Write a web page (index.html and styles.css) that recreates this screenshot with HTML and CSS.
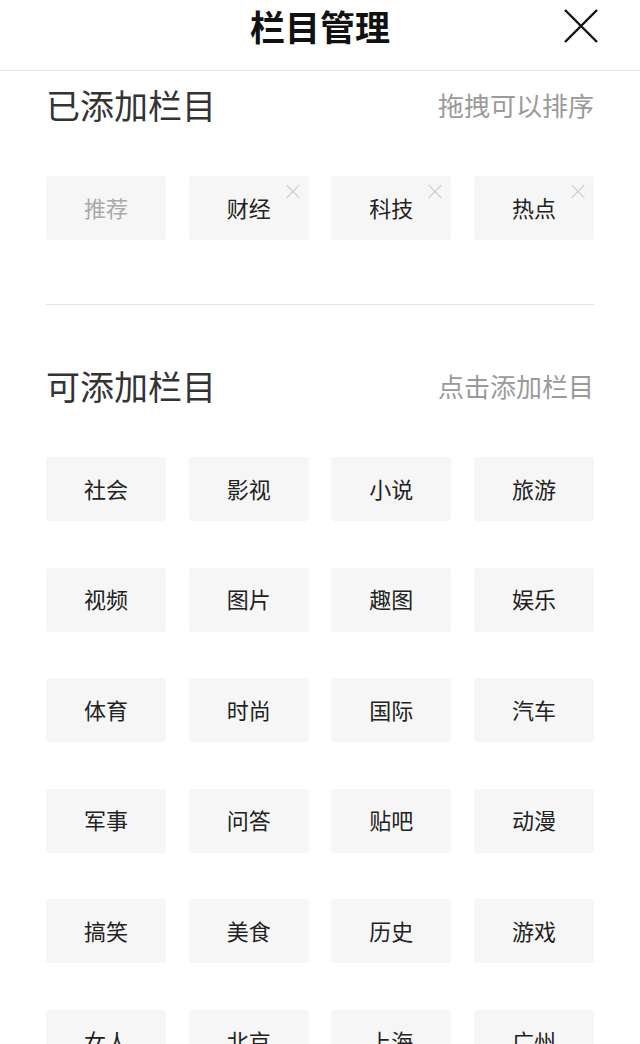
FILE: index.html
```html
<!DOCTYPE html>
<html lang="zh-CN">
<head>
  <meta charset="UTF-8">
  <title>栏目管理</title>
  <link rel="stylesheet" href="styles.css">
</head>
<body>
  <header class="topbar">
    <h1 class="topbar-title">栏目管理</h1>
    <button class="close-btn" aria-label="关闭">
      <svg width="34" height="34" viewBox="0 0 34 34">
        <path d="M1 1 L33 33 M33 1 L1 33" stroke="#111" stroke-width="2.4" fill="none"/>
      </svg>
    </button>
  </header>

  <section class="panel">
    <div class="panel-head">
      <h2 class="panel-title">已添加栏目</h2>
      <span class="panel-hint">拖拽可以排序</span>
    </div>
    <div class="tiles">
      <div class="tile tile-fixed">推荐</div>
      <div class="tile">财经<span class="tile-remove"></span></div>
      <div class="tile">科技<span class="tile-remove"></span></div>
      <div class="tile">热点<span class="tile-remove"></span></div>
    </div>
  </section>

  <hr class="divider">

  <section class="panel panel-more">
    <div class="panel-head">
      <h2 class="panel-title">可添加栏目</h2>
      <span class="panel-hint">点击添加栏目</span>
    </div>
    <div class="tiles">
      <div class="tile">社会</div>
      <div class="tile">影视</div>
      <div class="tile">小说</div>
      <div class="tile">旅游</div>
      <div class="tile">视频</div>
      <div class="tile">图片</div>
      <div class="tile">趣图</div>
      <div class="tile">娱乐</div>
      <div class="tile">体育</div>
      <div class="tile">时尚</div>
      <div class="tile">国际</div>
      <div class="tile">汽车</div>
      <div class="tile">军事</div>
      <div class="tile">问答</div>
      <div class="tile">贴吧</div>
      <div class="tile">动漫</div>
      <div class="tile">搞笑</div>
      <div class="tile">美食</div>
      <div class="tile">历史</div>
      <div class="tile">游戏</div>
      <div class="tile">女人</div>
      <div class="tile">北京</div>
      <div class="tile">上海</div>
      <div class="tile">广州</div>
    </div>
  </section>
</body>
</html>
```

FILE: styles.css
```css
body {
  margin: 0;
  background: #fff;
  color: #222;
  font-family: "Noto Sans CJK SC", "Noto Sans", sans-serif;
  height: 1044px;
  overflow: hidden;
}

.topbar {
  height: 70px;
  border-bottom: 1px solid #e3e3e3;
  display: flex;
  align-items: flex-start;
  justify-content: center;
  position: relative;
}

.topbar-title {
  margin: 0;
  font-size: 35px;
  font-weight: 700;
  color: #111;
  line-height: 52px;
}

.close-btn {
  position: absolute;
  top: 9px;
  right: 42px;
  padding: 0;
  border: 0;
  background: none;
  display: flex;
}

.panel {
  padding: 9px 46px 0;
}

.panel-head {
  height: 48px;
  display: flex;
  align-items: center;
  justify-content: space-between;
}

.panel-title {
  margin: 0;
  font-size: 34px;
  font-weight: 400;
  color: #333;
}

.panel-hint {
  font-size: 26px;
  color: #9a9a9a;
}

.tiles {
  margin-top: 48px;
  display: grid;
  grid-template-columns: repeat(4, 120px);
  justify-content: space-between;
  row-gap: 46.5px;
}

.tile {
  height: 64px;
  box-sizing: border-box;
  padding-bottom: 3px;
  background: #f6f6f6;
  border-radius: 3px;
  display: flex;
  align-items: center;
  justify-content: center;
  font-size: 22px;
  color: #222;
  position: relative;
}

.tile-fixed {
  color: #aaa;
}

.tile-remove {
  position: absolute;
  top: 8px;
  right: 9px;
  width: 14px;
  height: 14px;
}

.tile-remove::before,
.tile-remove::after {
  content: "";
  position: absolute;
  left: -2px;
  top: 6.5px;
  width: 18px;
  height: 1.2px;
  background: #c8c8c8;
  transform: rotate(45deg);
}

.tile-remove::after {
  transform: rotate(-45deg);
}

.divider {
  margin: 64px 46px 0;
  border: 0;
  border-top: 1px solid #e3e3e3;
  height: 0;
}

.panel-more {
  padding-top: 56px;
}
```
